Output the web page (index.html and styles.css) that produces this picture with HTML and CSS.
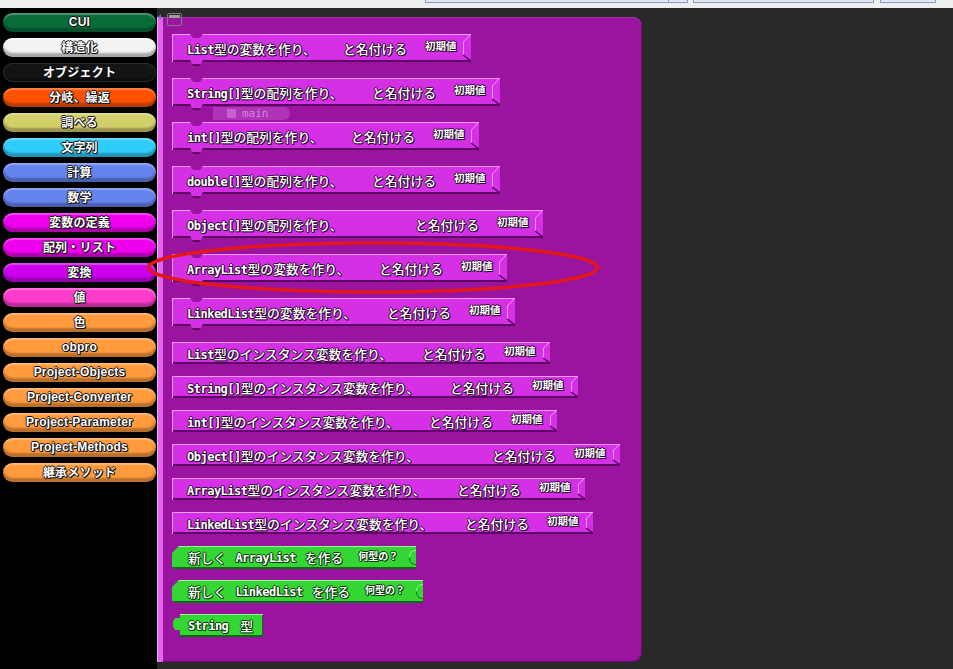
FILE: index.html
```html
<!DOCTYPE html>
<html lang="ja">
<head>
<meta charset="utf-8">
<title>Blocks</title>
<link rel="stylesheet" href="styles.css">
</head>
<body>
<div class="topbar">
  <span class="tb tb1"><i></i></span>
  <span class="tb tb2"></span>
  <span class="tb tb3"></span>
</div>
<div class="app">
  <nav class="sidebar">
    <div class="btn c-cui">CUI</div>
    <div class="btn c-white">構造化</div>
    <div class="btn c-black">オブジェクト</div>
    <div class="btn c-red">分岐、繰返</div>
    <div class="btn c-khaki">調べる</div>
    <div class="btn c-cyan">文字列</div>
    <div class="btn c-blue">計算</div>
    <div class="btn c-blue">数学</div>
    <div class="btn c-mag">変数の定義</div>
    <div class="btn c-mag">配列・リスト</div>
    <div class="btn c-purp">変換</div>
    <div class="btn c-pink">値</div>
    <div class="btn c-orange">色</div>
    <div class="btn c-orange">obpro</div>
    <div class="btn c-orange">Project-Objects</div>
    <div class="btn c-orange">Project-Converter</div>
    <div class="btn c-orange">Project-Parameter</div>
    <div class="btn c-orange">Project-Methods</div>
    <div class="btn c-orange">継承メソッド</div>
  </nav>
  <div class="work">
    <span class="tabicon"></span>
    <div class="workbody">
      <div class="strip"></div>
      <div class="panel">
        <div class="ghost"><span class="gbox"></span><span class="gtext">main</span></div>

        <div class="blk stmt"><span class="lead l156"><span class="lat">List</span>型の変数を作り、</span><span>と名付ける</span><span class="lbl">初期値</span><svg class="sock" width="9" height="28" viewBox="0 0 9 28"><polygon points="0,0 9,0 1,8 1,21 9,28 0,28" fill="#d630e6"/><polyline points="0,0.5 8.5,0.5 1.5,8 1.5,21" fill="none" stroke="#f49cfb"/><line x1="1" y1="21" x2="9" y2="27" stroke="#5c0664" stroke-width="1.5"/><line x1="0" y1="27" x2="9" y2="27" stroke="#5c0664" stroke-width="2"/></svg></div>

        <div class="blk stmt"><span class="lead l185"><span class="lat">String[]</span>型の配列を作り、</span><span>と名付ける</span><span class="lbl">初期値</span><svg class="sock" width="9" height="28" viewBox="0 0 9 28"><polygon points="0,0 9,0 1,8 1,21 9,28 0,28" fill="#d630e6"/><polyline points="0,0.5 8.5,0.5 1.5,8 1.5,21" fill="none" stroke="#f49cfb"/><line x1="1" y1="21" x2="9" y2="27" stroke="#5c0664" stroke-width="1.5"/><line x1="0" y1="27" x2="9" y2="27" stroke="#5c0664" stroke-width="2"/></svg></div>

        <div class="blk stmt"><span class="lead l164"><span class="lat">int[]</span>型の配列を作り、</span><span>と名付ける</span><span class="lbl">初期値</span><svg class="sock" width="9" height="28" viewBox="0 0 9 28"><polygon points="0,0 9,0 1,8 1,21 9,28 0,28" fill="#d630e6"/><polyline points="0,0.5 8.5,0.5 1.5,8 1.5,21" fill="none" stroke="#f49cfb"/><line x1="1" y1="21" x2="9" y2="27" stroke="#5c0664" stroke-width="1.5"/><line x1="0" y1="27" x2="9" y2="27" stroke="#5c0664" stroke-width="2"/></svg></div>

        <div class="blk stmt"><span class="lead l185"><span class="lat">double[]</span>型の配列を作り、</span><span>と名付ける</span><span class="lbl">初期値</span><svg class="sock" width="9" height="28" viewBox="0 0 9 28"><polygon points="0,0 9,0 1,8 1,21 9,28 0,28" fill="#d630e6"/><polyline points="0,0.5 8.5,0.5 1.5,8 1.5,21" fill="none" stroke="#f49cfb"/><line x1="1" y1="21" x2="9" y2="27" stroke="#5c0664" stroke-width="1.5"/><line x1="0" y1="27" x2="9" y2="27" stroke="#5c0664" stroke-width="2"/></svg></div>

        <div class="blk stmt"><span class="lead l228"><span class="lat">Object[]</span>型の配列を作り、</span><span>と名付ける</span><span class="lbl">初期値</span><svg class="sock" width="9" height="28" viewBox="0 0 9 28"><polygon points="0,0 9,0 1,8 1,21 9,28 0,28" fill="#d630e6"/><polyline points="0,0.5 8.5,0.5 1.5,8 1.5,21" fill="none" stroke="#f49cfb"/><line x1="1" y1="21" x2="9" y2="27" stroke="#5c0664" stroke-width="1.5"/><line x1="0" y1="27" x2="9" y2="27" stroke="#5c0664" stroke-width="2"/></svg></div>

        <div class="blk stmt"><span class="lead l192"><span class="lat">ArrayList</span>型の変数を作り、</span><span>と名付ける</span><span class="lbl">初期値</span><svg class="sock" width="9" height="28" viewBox="0 0 9 28"><polygon points="0,0 9,0 1,8 1,21 9,28 0,28" fill="#d630e6"/><polyline points="0,0.5 8.5,0.5 1.5,8 1.5,21" fill="none" stroke="#f49cfb"/><line x1="1" y1="21" x2="9" y2="27" stroke="#5c0664" stroke-width="1.5"/><line x1="0" y1="27" x2="9" y2="27" stroke="#5c0664" stroke-width="2"/></svg></div>

        <div class="blk stmt"><span class="lead l200"><span class="lat">LinkedList</span>型の変数を作り、</span><span>と名付ける</span><span class="lbl">初期値</span><svg class="sock" width="9" height="28" viewBox="0 0 9 28"><polygon points="0,0 9,0 1,8 1,21 9,28 0,28" fill="#d630e6"/><polyline points="0,0.5 8.5,0.5 1.5,8 1.5,21" fill="none" stroke="#f49cfb"/><line x1="1" y1="21" x2="9" y2="27" stroke="#5c0664" stroke-width="1.5"/><line x1="0" y1="27" x2="9" y2="27" stroke="#5c0664" stroke-width="2"/></svg></div>

        <div class="blk inst"><span class="lead l235"><span class="lat">List</span>型のインスタンス変数を作り、</span><span>と名付ける</span><span class="lbl">初期値</span><svg class="sock" width="9" height="22" viewBox="0 0 9 22"><polygon points="0,0 9,0 2,6 2,16 9,22 0,22" fill="#d630e6"/><polyline points="0,0.5 8.5,0.5 2.5,6 2.5,16" fill="none" stroke="#f49cfb"/><line x1="2" y1="16" x2="9" y2="21" stroke="#5c0664" stroke-width="1.5"/><line x1="0" y1="21" x2="9" y2="21" stroke="#5c0664" stroke-width="2"/></svg></div>

        <div class="blk inst"><span class="lead l263"><span class="lat">String[]</span>型のインスタンス変数を作り、</span><span>と名付ける</span><span class="lbl">初期値</span><svg class="sock" width="9" height="22" viewBox="0 0 9 22"><polygon points="0,0 9,0 2,6 2,16 9,22 0,22" fill="#d630e6"/><polyline points="0,0.5 8.5,0.5 2.5,6 2.5,16" fill="none" stroke="#f49cfb"/><line x1="2" y1="16" x2="9" y2="21" stroke="#5c0664" stroke-width="1.5"/><line x1="0" y1="21" x2="9" y2="21" stroke="#5c0664" stroke-width="2"/></svg></div>

        <div class="blk inst"><span class="lead l242"><span class="lat">int[]</span>型のインスタンス変数を作り、</span><span>と名付ける</span><span class="lbl">初期値</span><svg class="sock" width="9" height="22" viewBox="0 0 9 22"><polygon points="0,0 9,0 2,6 2,16 9,22 0,22" fill="#d630e6"/><polyline points="0,0.5 8.5,0.5 2.5,6 2.5,16" fill="none" stroke="#f49cfb"/><line x1="2" y1="16" x2="9" y2="21" stroke="#5c0664" stroke-width="1.5"/><line x1="0" y1="21" x2="9" y2="21" stroke="#5c0664" stroke-width="2"/></svg></div>

        <div class="blk inst"><span class="lead l305"><span class="lat">Object[]</span>型のインスタンス変数を作り、</span><span>と名付ける</span><span class="lbl">初期値</span><svg class="sock" width="9" height="22" viewBox="0 0 9 22"><polygon points="0,0 9,0 2,6 2,16 9,22 0,22" fill="#d630e6"/><polyline points="0,0.5 8.5,0.5 2.5,6 2.5,16" fill="none" stroke="#f49cfb"/><line x1="2" y1="16" x2="9" y2="21" stroke="#5c0664" stroke-width="1.5"/><line x1="0" y1="21" x2="9" y2="21" stroke="#5c0664" stroke-width="2"/></svg></div>

        <div class="blk inst"><span class="lead l270"><span class="lat">ArrayList</span>型のインスタンス変数を作り、</span><span>と名付ける</span><span class="lbl">初期値</span><svg class="sock" width="9" height="22" viewBox="0 0 9 22"><polygon points="0,0 9,0 2,6 2,16 9,22 0,22" fill="#d630e6"/><polyline points="0,0.5 8.5,0.5 2.5,6 2.5,16" fill="none" stroke="#f49cfb"/><line x1="2" y1="16" x2="9" y2="21" stroke="#5c0664" stroke-width="1.5"/><line x1="0" y1="21" x2="9" y2="21" stroke="#5c0664" stroke-width="2"/></svg></div>

        <div class="blk inst"><span class="lead l278"><span class="lat">LinkedList</span>型のインスタンス変数を作り、</span><span>と名付ける</span><span class="lbl">初期値</span><svg class="sock" width="9" height="22" viewBox="0 0 9 22"><polygon points="0,0 9,0 2,6 2,16 9,22 0,22" fill="#d630e6"/><polyline points="0,0.5 8.5,0.5 2.5,6 2.5,16" fill="none" stroke="#f49cfb"/><line x1="2" y1="16" x2="9" y2="21" stroke="#5c0664" stroke-width="1.5"/><line x1="0" y1="21" x2="9" y2="21" stroke="#5c0664" stroke-width="2"/></svg></div>

        <div class="gblk gnew"><span>新しく</span><span class="lat sp">ArrayList</span><span>を作る</span><span class="glbl">何型の？</span><svg class="gsock" width="10" height="23" viewBox="0 0 10 23"><path d="M0,0 H10 V4 C5,4 3,7 3,11.5 C3,16 5,19 10,19 V23 H0 Z" fill="#33d633"/><line x1="0" y1="0.5" x2="10" y2="0.5" stroke="#9af59a"/><path d="M10,4.5 C5.5,4.5 3.5,7.5 3.5,11.5" fill="none" stroke="#9af59a"/><path d="M3.5,11.5 C3.5,15.5 5.5,18.5 10,18.5" fill="none" stroke="#0d6a0d"/><line x1="0" y1="22" x2="10" y2="22" stroke="#0d6a0d" stroke-width="2"/></svg></div>

        <div class="gblk gnew"><span>新しく</span><span class="lat sp">LinkedList</span><span>を作る</span><span class="glbl">何型の？</span><svg class="gsock" width="10" height="23" viewBox="0 0 10 23"><path d="M0,0 H10 V4 C5,4 3,7 3,11.5 C3,16 5,19 10,19 V23 H0 Z" fill="#33d633"/><line x1="0" y1="0.5" x2="10" y2="0.5" stroke="#9af59a"/><path d="M10,4.5 C5.5,4.5 3.5,7.5 3.5,11.5" fill="none" stroke="#9af59a"/><path d="M3.5,11.5 C3.5,15.5 5.5,18.5 10,18.5" fill="none" stroke="#0d6a0d"/><line x1="0" y1="22" x2="10" y2="22" stroke="#0d6a0d" stroke-width="2"/></svg></div>

        <div class="gblk gstr"><span class="lat">String</span><span class="kata">型</span></div>
      </div>
    </div>
  </div>
</div>
<svg class="ring" width="456" height="56" viewBox="0 0 456 56"><ellipse cx="227" cy="27.5" rx="224.5" ry="24.5" fill="none" stroke="#e3161b" stroke-width="3.5"/></svg>
</body>
</html>
```

FILE: styles.css
```css
html, body {
  margin: 0;
  padding: 0;
}
body {
  width: 953px;
  height: 669px;
  overflow: hidden;
  background: #292929;
  font-family: "Liberation Sans", "Noto Sans CJK JP", sans-serif;
  position: relative;
}

/* top strip */
.topbar {
  height: 8px;
  background: #efefef;
  display: flex;
  align-items: flex-start;
  padding-left: 425px;
  gap: 5px;
}
.tb {
  height: 2px;
  border: 1px solid #8a9db6;
  border-top: none;
  background: #e2e9f3;
  display: flex;
  justify-content: flex-end;
}
.tb1 { width: 261px; }
.tb1 i { width: 18px; border-left: 1px solid #8a9db6; }
.tb2 { width: 179px; }
.tb3 { width: 54px; margin-left: 1px; }

.app {
  display: flex;
  height: 661px;
}

/* sidebar */
.sidebar {
  width: 157px;
  flex: none;
  background: #000;
  box-sizing: border-box;
  padding: 5px 0 0 3px;
  display: flex;
  flex-direction: column;
  gap: 6px;
}
.btn {
  width: 153px;
  height: 19px;
  flex: none;
  box-sizing: border-box;
  padding-bottom: 2px;
  border-radius: 10px;
  display: flex;
  align-items: center;
  justify-content: center;
  color: #fff;
  font-weight: bold;
  font-size: 12px;
  letter-spacing: 0.2px;
  text-shadow: -1px 0 0 #111, 1px 0 0 #111, 0 -1px 0 #111, 0 1px 0 #111, 1px 1px 0 #111;
  box-shadow: inset 0 2px 1px rgba(255,255,255,0.28), inset 0 -4px 2px rgba(0,0,0,0.28);
}
.c-cui { background: #086c39; }
.c-white { background: #f2f2f2; box-shadow: inset 0 2px 1px rgba(255,255,255,0.6), inset 0 -4px 2px rgba(0,0,0,0.3); }
.c-black { background: #141414; box-shadow: inset 0 0 0 1px #2c2c2c, inset 0 -3px 2px rgba(0,0,0,0.5); }
.c-red { background: #ff5200; }
.c-khaki { background: #d3cf6a; }
.c-cyan { background: #2fcdfb; }
.c-blue { background: #6584ee; }
.c-mag { background: #ee00ee; }
.c-purp { background: #cc00ee; }
.c-pink { background: #ff3dcc; }
.c-orange { background: #ff9b3c; }

/* workspace */
.work {
  flex: 1;
  position: relative;
}
.work::before {
  content: "";
  position: absolute;
  left: 1px;
  top: 6px;
  border-top: 3px solid transparent;
  border-bottom: 3px solid transparent;
  border-right: 3px solid #5b80b4;
}
.tabicon {
  position: absolute;
  left: 10px;
  top: 5px;
  width: 13px;
  height: 11px;
  border: 1px solid #7d7d7d;
  border-radius: 2px;
  z-index: 2;
}
.tabicon::before {
  content: "";
  display: block;
  margin: 1px 1px 0;
  height: 3px;
  background: #9c9c9c;
}
.workbody {
  display: flex;
  margin-top: 9px;
  height: 645px;
}
.strip {
  width: 5px;
  border-left: 1px solid #c9c4d6;
  background: #e862f2;
}
.panel {
  width: 479px;
  flex: none;
  position: relative;
  box-sizing: border-box;
  background: #9a14a0;
  border-radius: 0 9px 9px 0;
  box-shadow: inset 0 1px 0 #a92eb0, inset -1px -1px 0 #6c0a72;
  padding: 17px 0 0 9px;
  display: flex;
  flex-direction: column;
  align-items: flex-start;
}

/* ghost "main" block */
.ghost {
  position: absolute;
  left: 50px;
  top: 90px;
  width: 77px;
  height: 13px;
  background: rgba(214, 110, 224, 0.35);
  border-radius: 0 6px 6px 0;
  display: flex;
  align-items: center;
  gap: 6px;
  padding-left: 14px;
  box-sizing: border-box;
}
.gbox {
  width: 9px;
  height: 9px;
  background: rgba(230, 150, 240, 0.45);
}
.gtext {
  font-family: "DejaVu Sans Mono", monospace;
  font-size: 11px;
  color: #cf86dc;
}

/* magenta blocks */
.blk {
  display: inline-flex;
  align-items: center;
  position: relative;
  box-sizing: border-box;
  padding-left: 15px;
  background: #d630e6;
  box-shadow: inset 1px 1px 0 #f49cfb, inset 0 -2px 0 #5c0664;
  color: #fff;
  font-family: "Noto Sans CJK JP", sans-serif;
  font-weight: 500;
  font-size: 12.8px;
  white-space: nowrap;
  text-shadow: -1px 0 0 #2a0530, 1px 0 0 #2a0530, 0 -1px 0 #2a0530, 0 1px 0 #2a0530, 1px 1px 0 #2a0530;
}
.stmt {
  height: 28px;
  margin-bottom: 16px;
  padding-top: 1px;
}
.stmt::before {
  content: "";
  position: absolute;
  left: 18px;
  top: 0;
  width: 13px;
  height: 4px;
  background: #9a14a0;
  clip-path: polygon(0 0, 100% 0, 75% 100%, 25% 100%);
}
.stmt::after {
  content: "";
  position: absolute;
  left: 18px;
  bottom: -4px;
  width: 13px;
  height: 6px;
  background: linear-gradient(#d630e6 0 4px, #5c0664 4px);
  clip-path: polygon(0 0, 100% 0, 75% 100%, 25% 100%);
}
.inst {
  height: 22px;
  margin-bottom: 12px;
}
.lead { display: inline-block; }
.l156 { width: 156px; }
.l164 { width: 164px; }
.l185 { width: 185px; }
.l192 { width: 192px; }
.l200 { width: 200px; }
.l228 { width: 228px; }
.l235 { width: 235px; }
.l242 { width: 242px; }
.l263 { width: 263px; }
.l270 { width: 270px; }
.l278 { width: 278px; }
.l305 { width: 305px; }

.lat {
  font-family: "DejaVu Sans Mono", monospace;
  font-size: 12px;
  font-weight: bold;
  letter-spacing: -0.5px;
}
.lbl {
  margin-left: 18px;
  font-size: 10.5px;
  font-weight: bold;
  margin-bottom: 5px;
}
.stmt .lbl { margin-bottom: 6px; }
.sock {
  margin-left: 6px;
  align-self: flex-end;
  flex: none;
}

/* green blocks */
.gblk {
  display: inline-flex;
  align-items: center;
  position: relative;
  box-sizing: border-box;
  height: 23px;
  margin-bottom: 11px;
  background: #33d633;
  box-shadow: inset 0 1px 0 #9af59a, inset 0 -2px 0 #0d6a0d;
  color: #fff;
  font-family: "Noto Sans CJK JP", sans-serif;
  font-weight: 500;
  font-size: 12.8px;
  white-space: nowrap;
  text-shadow: -1px 0 0 #063806, 1px 0 0 #063806, 0 -1px 0 #063806, 0 1px 0 #063806, 1px 1px 0 #063806;
}
.gnew {
  padding-left: 16px;
  clip-path: polygon(7px 0, 100% 0, 100% 100%, 3px 100%, 0 calc(100% - 3px), 0 7px);
}
.sp { margin: 0 9px; }
.glbl {
  margin-left: 15px;
  font-size: 10px;
  font-weight: bold;
  margin-bottom: 5px;
}
.gsock {
  margin-left: 8px;
  flex: none;
}
.gstr {
  margin-left: 8px;
  padding: 0 10px 0 8px;
  box-shadow: inset 0 1px 0 #9af59a, inset 0 -2px 0 #0d6a0d, inset -1px 0 0 #0d6a0d;
}
.gstr::before {
  content: "";
  position: absolute;
  left: -7px;
  top: 4px;
  width: 7px;
  height: 12px;
  background: #33d633;
  clip-path: polygon(100% 0, 30% 0, 0 30%, 0 70%, 30% 100%, 100% 100%);
}
.kata { margin-left: 12px; }

/* red annotation ring */
.ring {
  position: absolute;
  left: 146px;
  top: 240px;
  pointer-events: none;
}
```
